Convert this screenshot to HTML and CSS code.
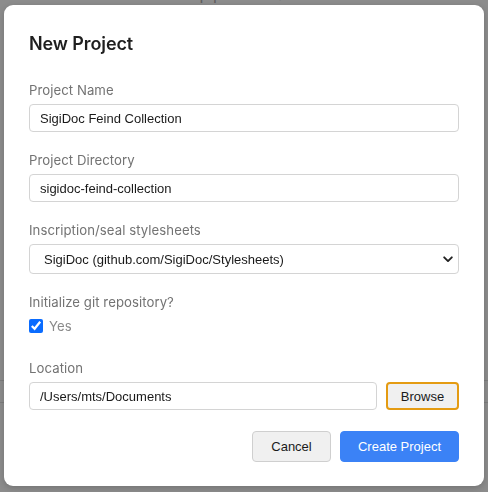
FILE: index.html
```html
<!DOCTYPE html>
<html lang="en">
<head>
<meta charset="utf-8">
<title>New Project</title>
<link rel="stylesheet" href="styles.css">
</head>
<body>
<div class="app">
  <p class="empty">No pipeline loaded</p>
  <div class="band"></div>
</div>
<div class="overlay">
  <form class="modal">
    <h2 class="title">New Project</h2>
    <div class="field">
      <label class="label" for="pname">Project Name</label>
      <input class="input" id="pname" type="text" value="SigiDoc Feind Collection">
    </div>
    <div class="field">
      <label class="label" for="pdir">Project Directory</label>
      <input class="input" id="pdir" type="text" value="sigidoc-feind-collection">
    </div>
    <div class="field">
      <label class="label" for="psheets">Inscription/seal stylesheets</label>
      <select class="select" id="psheets">
        <option>SigiDoc (github.com/SigiDoc/Stylesheets)</option>
      </select>
    </div>
    <div class="field field-check">
      <span class="label">Initialize git repository?</span>
      <label class="check-row"><input type="checkbox" class="check" checked> <span>Yes</span></label>
    </div>
    <div class="field field-last">
      <label class="label" for="ploc">Location</label>
      <div class="loc-row">
        <input class="input" id="ploc" type="text" value="/Users/mts/Documents">
        <button type="button" class="btn btn-browse">Browse</button>
      </div>
    </div>
    <div class="footer">
      <button type="button" class="btn btn-cancel">Cancel</button>
      <button type="button" class="btn btn-primary">Create Project</button>
    </div>
  </form>
</div>
</body>
</html>
```
FILE: styles.css
```css
* { box-sizing: border-box; }
html, body { margin: 0; padding: 0; }
body {
  width: 488px;
  height: 492px;
  overflow: hidden;
  background: #8c8c8c;
  font-family: Inter, "Liberation Sans", sans-serif;
}
.app {
  display: flex;
  flex-direction: column;
  align-items: center;
}
.empty {
  margin: -16px 0 0;
  font-size: 16px;
  line-height: 20px;
  color: #5e5e5e;
}
.band {
  align-self: stretch;
  margin-top: 376px;
  height: 23px;
  border-top: 1px solid #7c7c7c;
  border-bottom: 1px solid #7c7c7c;
}
.overlay {
  position: fixed;
  inset: 0;
  padding: 5px 4px;
}
.modal {
  width: 480px;
  background: #fff;
  border-radius: 9px;
  padding: 25px 25px 24px;
  box-shadow: 0 2px 6px rgba(0,0,0,0.18);
  display: flex;
  flex-direction: column;
}
.title {
  margin: 0 0 22px;
  font-size: 18px;
  line-height: 28px;
  font-weight: 600;
  letter-spacing: -0.1px;
  color: #1f1f1f;
}
.field {
  display: flex;
  flex-direction: column;
  margin-bottom: 18px;
}
.field-check { margin-bottom: 22px; }
.field-last { margin-bottom: 21px; }
.label {
  font-size: 13.2px;
  line-height: 20px;
  letter-spacing: 0.05px;
  color: #737373;
  margin-bottom: 4px;
}
.input {
  height: 28px;
  width: 100%;
  border: 1px solid #d4d4d4;
  border-radius: 4px;
  padding: 0 10px;
  font-family: "Liberation Sans", Arial, sans-serif;
  font-size: 13px;
  color: #1a1a1a;
  background: #fff;
  outline: none;
}
.select {
  appearance: none;
  -webkit-appearance: none;
  height: 30px;
  width: 100%;
  border: 1px solid #d4d4d4;
  border-radius: 4px;
  padding: 0 30px 0 14px;
  font-family: "Liberation Sans", Arial, sans-serif;
  font-size: 13px;
  color: #1a1a1a;
  background: #fff url("data:image/svg+xml,%3Csvg xmlns='http://www.w3.org/2000/svg' width='10' height='7' viewBox='0 0 10 7'%3E%3Cpath d='M1.2 1.3 L5 5.1 L8.8 1.3' fill='none' stroke='%23222' stroke-width='1.9' stroke-linecap='round' stroke-linejoin='round'/%3E%3C/svg%3E") no-repeat right 5px center;
  outline: none;
}
.check-row {
  display: flex;
  align-items: center;
  height: 20px;
  gap: 6px;
  font-size: 13.2px;
  color: #8a8a8a;
}
.check {
  margin: 0;
  width: 14px;
  height: 14px;
  accent-color: #0a6cff;
}
.loc-row {
  display: flex;
  gap: 9px;
}
.loc-row .input { flex: 1; }
.btn {
  font-family: "Liberation Sans", Arial, sans-serif;
  font-size: 13px;
  border-radius: 4px;
  cursor: pointer;
}
.btn-browse {
  flex: none;
  width: 73px;
  height: 28px;
  background: #f0f0f0;
  border: 2px solid #e49b12;
  color: #1a1a1a;
  padding: 0;
}
.footer {
  display: flex;
  justify-content: flex-end;
  gap: 9px;
}
.btn-cancel {
  height: 31px;
  width: 79px;
  background: #f0f0f0;
  border: 1px solid #cfcfcf;
  color: #1a1a1a;
}
.btn-primary {
  height: 31px;
  width: 119px;
  background: #3b82f6;
  border: 1px solid #3b82f6;
  color: #fff;
}
```
